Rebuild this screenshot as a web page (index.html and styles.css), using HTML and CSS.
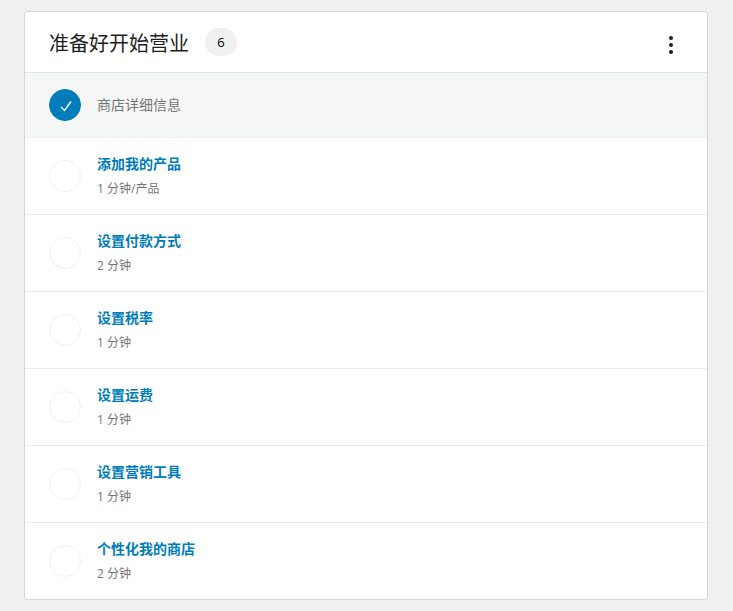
FILE: index.html
```html
<!DOCTYPE html>
<html lang="zh-CN">
<head>
<meta charset="utf-8">
<title>准备好开始营业</title>
<link rel="stylesheet" href="styles.css">
</head>
<body>
<section class="card">
  <header class="card-header">
    <h2 class="card-title">准备好开始营业</h2>
    <span class="badge">6</span>
    <button class="menu" aria-label="更多">
      <svg width="24" height="24" viewBox="0 0 24 24"><circle cx="12" cy="5" r="2"/><circle cx="12" cy="12" r="2"/><circle cx="12" cy="19" r="2"/></svg>
    </button>
  </header>
  <div class="task task-done">
    <span class="circle circle-done">
      <svg width="16" height="16" viewBox="0 0 16 16"><path d="M4 10 L7.5 13.5 L14 4.5" fill="none" stroke="#fff" stroke-width="1.4"/></svg>
    </span>
    <span class="done-label">商店详细信息</span>
  </div>
  <div class="task">
    <span class="circle"></span>
    <div class="task-text"><a class="task-title">添加我的产品</a><span class="task-time">1 分钟/产品</span></div>
  </div>
  <div class="task">
    <span class="circle"></span>
    <div class="task-text"><a class="task-title">设置付款方式</a><span class="task-time">2 分钟</span></div>
  </div>
  <div class="task">
    <span class="circle"></span>
    <div class="task-text"><a class="task-title">设置税率</a><span class="task-time">1 分钟</span></div>
  </div>
  <div class="task">
    <span class="circle"></span>
    <div class="task-text"><a class="task-title">设置运费</a><span class="task-time">1 分钟</span></div>
  </div>
  <div class="task">
    <span class="circle"></span>
    <div class="task-text"><a class="task-title">设置营销工具</a><span class="task-time">1 分钟</span></div>
  </div>
  <div class="task">
    <span class="circle"></span>
    <div class="task-text"><a class="task-title">个性化我的商店</a><span class="task-time">2 分钟</span></div>
  </div>
</section>
</body>
</html>
```
FILE: styles.css
```css
* { box-sizing: border-box; }
html, body { margin: 0; padding: 0; }
body {
  background: #f0f0f0;
  font-family: "Open Sans", "Noto Sans CJK SC", sans-serif;
  padding: 11px 25px 0 24px;
  height: 611px;
  overflow: hidden;
}
.card {
  background: #fff;
  border: 1px solid #d6d6d6;
  border-radius: 3px;
  height: 589px;
  overflow: hidden;
}
.card-header {
  display: flex;
  align-items: center;
  height: 61px;
  padding: 0 24px;
  border-bottom: 1px solid #e2e4e7;
}
.card-title {
  margin: 4px 0 0;
  font-size: 20px;
  line-height: 28px;
  font-weight: 400;
  color: #1e1e1e;
}
.badge {
  width: 32px;
  height: 28px;
  margin: 0 0 0 16px;
  border-radius: 14px;
  background: #f0f0f0;
  color: #000;
  font-size: 13px;
  font-weight: 500;
  line-height: 28px;
  text-align: center;
}
.menu {
  margin: 0 0 0 auto;
  padding: 0;
  width: 24px;
  height: 24px;
  border: 0;
  background: none;
  display: flex;
  fill: #1e1e1e;
  position: relative;
  top: 3px;
}
.task {
  display: flex;
  align-items: center;
  gap: 16px;
  height: 77px;
  padding: 0 24px;
  border-bottom: 1px solid #ebebeb;
}
.task:last-child { border-bottom-color: transparent; }
.task-done {
  height: 65px;
  background: #f5f7f7;
  border-bottom-color: #eef0f0;
}
.circle {
  flex: none;
  width: 32px;
  height: 32px;
  border-radius: 50%;
  border: 1px solid #f0f0f0;
  display: flex;
  align-items: center;
  justify-content: center;
}
.circle-done {
  background: #007cba;
  border-color: #007cba;
}
.done-label {
  font-size: 14px;
  line-height: 20px;
  color: #757575;
}
.task-text {
  display: flex;
  flex-direction: column;
  gap: 5px;
}
.task-title {
  font-size: 14px;
  line-height: 20px;
  font-weight: 700;
  color: #007cba;
}
.task-time {
  font-size: 12px;
  line-height: 20px;
  color: #757575;
}
```
